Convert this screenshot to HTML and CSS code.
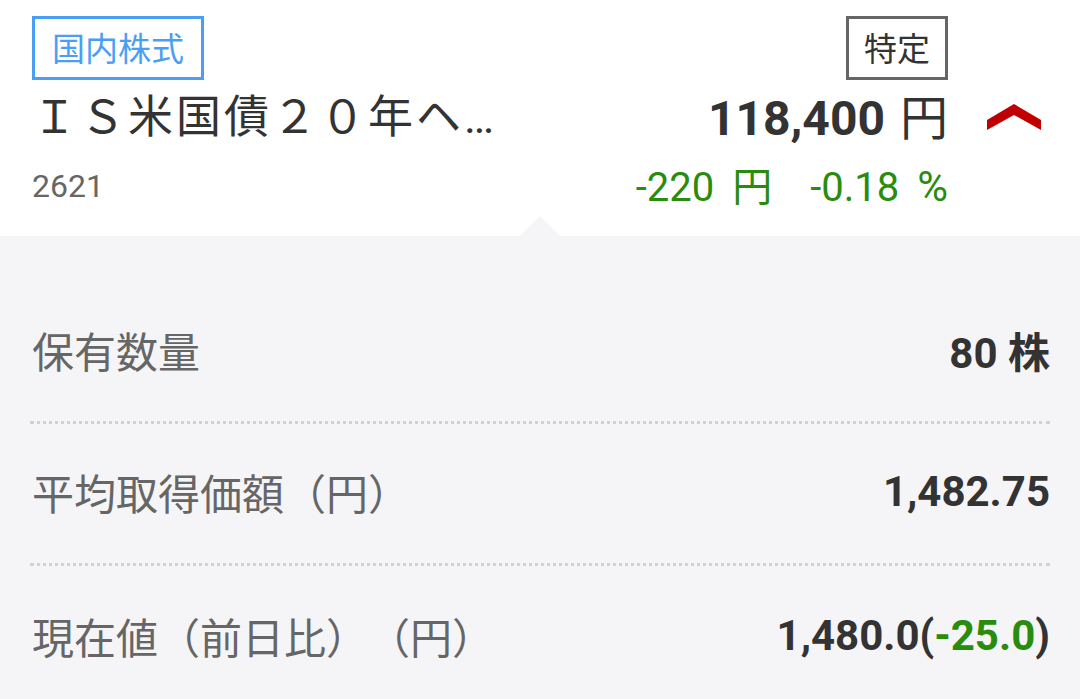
FILE: index.html
```html
<!DOCTYPE html>
<html lang="ja">
<head>
<meta charset="utf-8">
<title>保有銘柄</title>
<link rel="stylesheet" href="styles.css">
</head>
<body>
<div class="screen">
  <header class="head">
    <div class="cell badges-left"><span class="badge badge-blue">国内株式</span></div>
    <div class="cell badges-right"><span class="badge badge-gray">特定</span></div>
    <div class="cell"></div>

    <div class="cell title">ＩＳ米国債２０年ヘッジ有</div>
    <div class="cell price"><span class="num">118,400</span><span class="unit">円</span></div>
    <div class="cell chev">
      <svg width="54" height="26" viewBox="0 0 54 26"><polygon points="0,16 27,0 54,16 54,26 27,11 0,26" fill="#c00000"/></svg>
    </div>

    <div class="cell code">2621</div>
    <div class="cell change"><span>-220</span><span class="cunit">円</span><span class="pct">-0.18</span><span class="pcts">%</span></div>
    <div class="cell"></div>
  </header>

  <section class="panel">
    <div class="row">
      <span class="label">保有数量</span>
      <span class="value">80 株</span>
    </div>
    <div class="row">
      <span class="label">平均取得価額（円）</span>
      <span class="value">1,482.75</span>
    </div>
    <div class="row">
      <span class="label">現在値（前日比）（円）</span>
      <span class="value">1,480.0(<span class="down">-25.0</span>)</span>
    </div>
  </section>
</div>
</body>
</html>
```

FILE: styles.css
```css
html, body {
  margin: 0;
  padding: 0;
  background: #f5f5f7;
}

.screen {
  width: 1080px;
  font-family: Roboto, "Noto Sans CJK JP", sans-serif;
  color: #333;
}

.head {
  background: #fff;
  padding: 16px 39px 20px 32px;
  display: grid;
  grid-template-columns: 470px 1fr 54px;
  grid-template-rows: 64px 76px 60px;
}

.cell {
  min-width: 0;
}

.badges-right,
.price,
.change {
  display: flex;
  justify-content: flex-end;
  align-items: baseline;
  margin-right: 39px;
}

.badges-right { align-items: flex-start; }

.badge {
  display: inline-block;
  box-sizing: border-box;
  height: 64px;
  line-height: 57px;
  font-size: 33px;
  padding: 0 15px;
  border: 3px solid;
  font-family: "Noto Sans CJK JP", sans-serif;
}

.badge-blue {
  color: #4a9ff5;
  border-color: #4a9ff5;
  padding: 0 17px;
}

.badge-gray {
  color: #333;
  border-color: #666;
}

.title {
  font-size: 45px;
  line-height: 76px;
  letter-spacing: 3px;
  white-space: nowrap;
  overflow: hidden;
  text-overflow: ellipsis;
  color: #333;
}

.price {
  line-height: 68px;
  font-size: 48px;
}

.price .num {
  font-weight: 700;
}

.price .unit {
  margin-left: 15px;
  font-family: "Noto Sans CJK JP", sans-serif;
  font-weight: 400;
}

.chev {
  display: flex;
  align-items: flex-start;
  padding-top: 24px;
}

.chev svg { display: block; }

.code {
  font-size: 32px;
  line-height: 60px;
  color: #666;
}

.change {
  font-size: 40px;
  line-height: 56px;
  color: #2a8c0c;
}

.change .cunit {
  margin-left: 18px;
  font-family: "Noto Sans CJK JP", sans-serif;
}

.change .pct {
  margin-left: 38px;
}

.change .pcts {
  margin-left: 18px;
  font-size: 42px;
}

.panel {
  position: relative;
  background: #f5f5f7;
  padding: 46px 30px 0 30px;
  min-height: 417px;
}

.panel::before {
  content: "";
  position: absolute;
  left: 520px;
  top: -20px;
  width: 0;
  height: 0;
  border-left: 20px solid transparent;
  border-right: 20px solid transparent;
  border-bottom: 20px solid #f5f5f7;
}

.row {
  height: 142px;
  box-sizing: border-box;
  padding: 0 0 4px 2px;
  display: flex;
  align-items: center;
  justify-content: space-between;
  border-bottom: 3px dotted #d2d2d2;
}

.row:last-child {
  border-bottom: none;
}

.label {
  font-size: 42px;
  color: #666;
  font-family: "Noto Sans CJK JP", sans-serif;
  text-spacing-trim: space-all;
}

.value {
  font-size: 42px;
  font-weight: 700;
  color: #333;
}

.down {
  color: #2a8c0c;
}
```
